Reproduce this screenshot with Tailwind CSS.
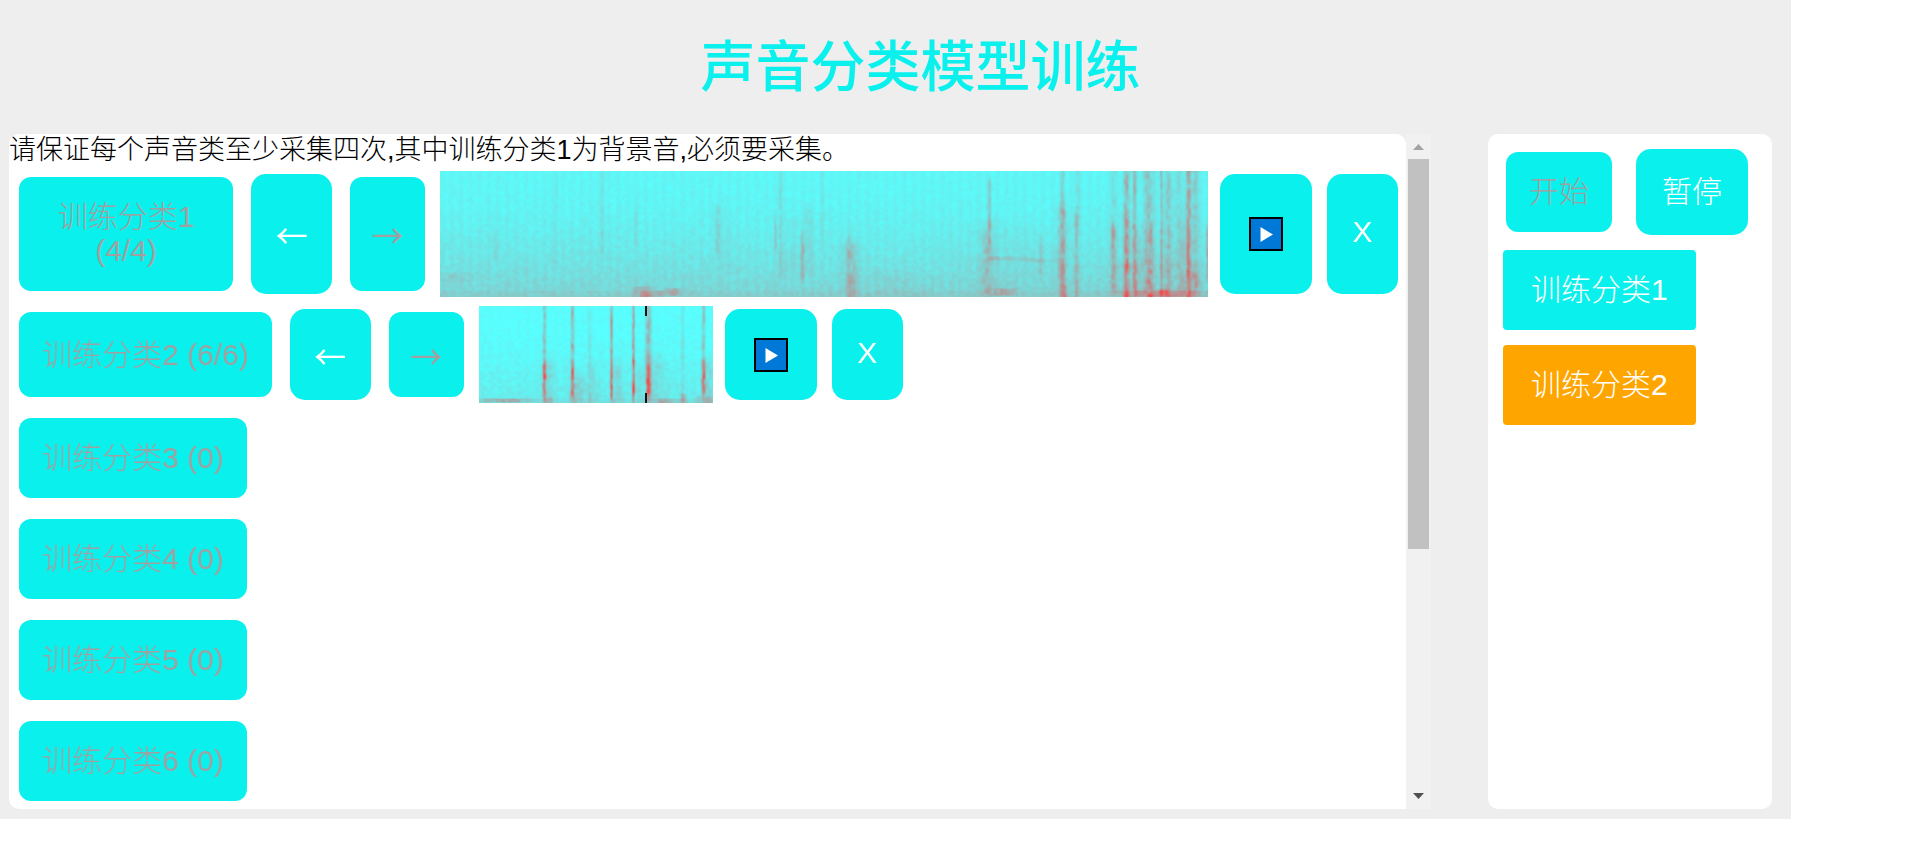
<!DOCTYPE html>
<html lang="zh-CN">
<head>
<meta charset="utf-8">
<title>声音分类模型训练</title>
<script src="https://cdn.jsdelivr.net/npm/@tailwindcss/browser@4"></script>
</head>
<body class="bg-white font-['Liberation_Sans','SimSun','Noto_Sans_CJK_SC',sans-serif] font-light text-black">
<div class="mr-[123px] bg-[#eeeeee] pb-[10px]">
  <h1 class="pl-[50px] pt-[27px] pb-[27px] text-center text-[55px] leading-[80px] font-medium text-[#0af1ed]">声音分类模型训练</h1>
  <div class="flex pl-[9px] pr-[19px]">
    <main class="flex min-w-0 flex-1">
      <div class="min-w-0 flex-1 rounded-tl-[10px] rounded-tr-[10px] rounded-bl-[10px] bg-white pb-[2px]">
        <p class="mb-[4px] text-[27px] leading-[33px]">请保证每个声音类至少采集四次,其中训练分类1为背景音,必须要采集。</p>
        <div class="flex flex-col gap-[9px] pl-[10px] text-[30px] leading-[34px]">
          <section class="flex">
            <button disabled class="my-[6px] w-[214px] rounded-[12px] bg-[#0af1ed] px-[23px] text-[#a0a0a0]">训练分类1 (4/4)</button>
            <button class="my-[3px] ml-[18px] w-[81px] rounded-[15px] bg-[#0af1ed] font-['Noto_Sans_CJK_SC',sans-serif] text-[32px] font-normal text-white">←</button>
            <button disabled class="my-[6px] ml-[18px] w-[75px] rounded-[12px] bg-[#0af1ed] font-['Noto_Sans_CJK_SC',sans-serif] text-[32px] font-normal text-[#a0a0a0]">→</button>
            <canvas id="spec1" width="768" height="126" class="ml-[15px] h-[126px] w-[768px]"></canvas>
            <button aria-label="播放" class="my-[3px] ml-[12px] rounded-[15px] bg-[#0af1ed] px-[29px]">
              <svg width="34" height="34" viewBox="0 0 34 34"><rect x="1" y="1" width="32" height="32" fill="#0078d7" stroke="#000" stroke-width="2"/><path d="M11.500 10v15l12.500-7.500z" fill="#fff"/></svg>
            </button>
            <button class="my-[3px] ml-[15px] w-[71px] rounded-[15px] bg-[#0af1ed] pb-[4px] text-white">X</button>
          </section>
          <section class="flex">
            <button disabled class="my-[6px] rounded-[12px] bg-[#0af1ed] px-[23px] text-[#a0a0a0]">训练分类2 (6/6)</button>
            <button class="my-[3px] ml-[18px] w-[81px] rounded-[15px] bg-[#0af1ed] font-['Noto_Sans_CJK_SC',sans-serif] text-[32px] font-normal text-white">←</button>
            <button disabled class="my-[6px] ml-[18px] w-[75px] rounded-[12px] bg-[#0af1ed] font-['Noto_Sans_CJK_SC',sans-serif] text-[32px] font-normal text-[#a0a0a0]">→</button>
            <canvas id="spec2" width="234" height="97" class="ml-[15px] h-[97px] w-[234px]"></canvas>
            <button aria-label="播放" class="my-[3px] ml-[12px] rounded-[15px] bg-[#0af1ed] px-[29px]">
              <svg width="34" height="34" viewBox="0 0 34 34"><rect x="1" y="1" width="32" height="32" fill="#0078d7" stroke="#000" stroke-width="2"/><path d="M11.500 10v15l12.500-7.500z" fill="#fff"/></svg>
            </button>
            <button class="my-[3px] ml-[15px] w-[71px] rounded-[15px] bg-[#0af1ed] pb-[4px] text-white">X</button>
          </section>
          <section class="flex"><button disabled class="my-[6px] h-[80px] rounded-[12px] bg-[#0af1ed] px-[23px] text-[#a0a0a0]">训练分类3 (0)</button></section>
          <section class="flex"><button disabled class="my-[6px] h-[80px] rounded-[12px] bg-[#0af1ed] px-[23px] text-[#a0a0a0]">训练分类4 (0)</button></section>
          <section class="flex"><button disabled class="my-[6px] h-[80px] rounded-[12px] bg-[#0af1ed] px-[23px] text-[#a0a0a0]">训练分类5 (0)</button></section>
          <section class="flex"><button disabled class="my-[6px] h-[80px] rounded-[12px] bg-[#0af1ed] px-[23px] text-[#a0a0a0]">训练分类6 (0)</button></section>
        </div>
      </div>
      <div class="flex w-[25px] flex-col items-center bg-[#f1f1f1]" aria-hidden="true">
        <svg class="mt-[10px] mb-[9px]" width="11" height="6" viewBox="0 0 11 6"><path d="M0 6L5.500 0L11 6z" fill="#a3a3a3"/></svg>
        <div class="h-[390px] w-[21px] bg-[#c1c1c1]"></div>
        <svg class="mt-auto mb-[10px]" width="11" height="6" viewBox="0 0 11 6"><path d="M0 0h11L5.500 6z" fill="#505050"/></svg>
      </div>
    </main>
    <aside class="ml-[57px] w-[284px] rounded-[10px] bg-white px-[15px] pt-[15px] text-[30px] leading-[34px]">
      <div class="flex items-center">
        <button disabled class="ml-[3px] h-[80px] rounded-[12px] bg-[#0af1ed] px-[23px] text-[#a0a0a0]">开始</button>
        <button class="ml-[24px] h-[86px] rounded-[15px] bg-[#0af1ed] px-[26px] text-white">暂停</button>
      </div>
      <div class="mt-[15px] flex flex-col items-start gap-[15px] text-white">
        <button class="h-[80px] rounded-[4px] bg-[#0af1ed] px-[28px]">训练分类1</button>
        <button class="h-[80px] rounded-[4px] bg-[#ffa500] px-[28px]">训练分类2</button>
      </div>
    </aside>
  </div>
</div>
<script>
// Each mark: [centre x, half width, top y, bottom y, strength]
const marks1 = [
  [55,3,60,85,.12],[116,2,0,90,.10],[162,2,0,80,.20],[195,2,35,70,.16],[277,3,40,75,.22],[284,8,35,100,.06],
  [335,1.500,54,72,.30],[340,2,0,100,.26],[350,7,50,100,.06],[362,2,65,102,.40],[368,5,40,95,.16],[382,2,0,70,.12],
  [202,9,116,125,.45],[208,6,120,124,.3],[220,5,120,124,.25],[233,6,118,123,.50],[15,16,102,110,.14],
  [411,6,75,124,.38],[408,2,65,120,.16],[455,30,106,122,.08],[547,6,60,118,.32],[549,2,15,72,.45],
  [565,20,86,88,.26],[595,16,88,90,.20],[562,11,118,123,.42],[560,40,55,120,.06],[600,2,72,102,.28],
  [622,5,40,120,.38],[622,2.500,0,125,.34],[625,2,115,125,.3],[636,2.500,45,122,.42],[637,3,0,50,.20],
  [673,3,0,70,.22],[673,3,60,115,.50],[686,3,0,125,.60],[686,3,50,125,.2],[694,2,0,125,.55],[697,6,60,125,.22],
  [708,4,0,125,.45],[710,3,60,125,.3],[721,1.500,0,125,.42],[728,3,0,125,.38],[738,3,0,120,.20],[742,3,60,120,.22],
  [748,2.500,0,125,.80],[755,3,0,125,.38],[754,5,100,115,.3],[767,1.500,60,100,.5],
  [725,42,0,125,.10],[725,42,120,124,.38],[723,12,118,125,.28],[700,60,93,96,.08]];
const marks2 = [
  [65,1.800,0,85,.42],[65,1.800,62,86,.45],[69,6,60,97,.18],[93,1.800,0,86,.52],[93,2,62,86,.40],[98,8,72,97,.20],
  [110,2,10,97,.15],[114,6,65,97,.10],[132,1.500,0,86,.55],[132,1.500,60,84,.35],[138,6,60,97,.16],
  [154,1.500,0,90,.60],[154,1.500,60,84,.30],[159,5,65,97,.12],[169,3,0,86,.48],[169,2.500,60,86,.55],[178,10,55,97,.14],
  [203,2,0,97,.14],[204,3,88,97,.25],[224,2,0,86,.36],[224,2.200,62,84,.42],[229,5,60,97,.18],
  [24,24,93,95,.42],[188,12,93,96,.28],[225,9,91,97,.25],[70,4,92,97,.2]];
function paint(id, marks, top, bottom, gain, seed) {
  const c = document.getElementById(id), g = c.getContext('2d'), w = c.width, h = c.height;
  const img = g.createImageData(w, h);
  const rnd = (x, y) => { const s = Math.sin(x * 127.100 + y * 311.700 + seed) * 43758.545; return s - Math.floor(s); };
  const noise = (x, y) => {
    const i = Math.floor(x), j = Math.floor(y), a = x - i, b = y - j;
    return (rnd(i,j)*(1-a) + rnd(i+1,j)*a)*(1-b) + (rnd(i,j+1)*(1-a) + rnd(i+1,j+1)*a)*b;
  };
  for (let y = 0; y < h; y++) for (let x = 0; x < w; x++) {
    const t = y / h;
    let v = top + (bottom - top) * t * t;
    v += (noise(x / 3, y / 3) - .5) * (.05 + .06 * t) + .018 * Math.sin(x * .68) * (id === 'spec1' ? 1 : .4);
    if (t > .95) v += .04;
    for (const [cx, hw, y0, y1, s] of marks) {
      const d = Math.abs(x - cx) / hw;
      if (d > 2) continue;
      const e = (y1 - y0) > 15 ? 12 : 2;
      const edge = Math.max(0, Math.min(1, y0 <= 0 ? 1 : (y - y0 + e) / e, (y1 - y + e) / e));
      v += gain * s * Math.exp(-d * d) * edge * (.4 + .95 * noise(x / 3 + 50, y / 5));
    }
    v = Math.max(0, Math.min(1, v));
    const k = (y * w + x) * 4;
    img.data[k] = 88 + 152 * v;
    img.data[k+1] = img.data[k+2] = 255 - 175 * v;
    img.data[k+3] = 255;
  }
  g.putImageData(img, 0, 0);
  return g;
}
paint('spec1', marks1, .05, .26, .58, 3);
const g2 = paint('spec2', marks2, .01, .12, .85, 8);
g2.fillStyle = '#111';
g2.fillRect(166, 0, 2, 10);
g2.fillRect(166, 87, 2, 10);
</script>
</body>
</html>
